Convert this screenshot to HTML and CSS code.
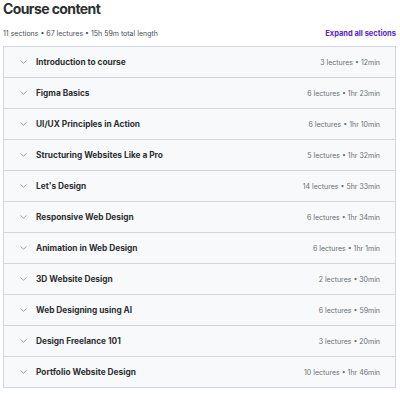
FILE: index.html
```html
<!DOCTYPE html>
<html>
<head>
<meta charset="utf-8">
<link rel="stylesheet" href="styles.css">
</head>
<body>
<div class="page">
  <h2 class="title">Course content</h2>
  <div class="summary">
    <span class="meta">11 sections • 67 lectures • 15h 59m total length</span>
    <span class="expand">Expand all sections</span>
  </div>
  <div class="list">
    <div class="row"><span class="chev"><svg width="7" height="4" viewBox="0 0 7 4"><path d="M0.5 0.5 L3.5 3.2 L6.5 0.5" fill="none" stroke="#8a8f93" stroke-width="0.8"/></svg></span><span class="name">Introduction to course</span><span class="info">3 lectures • 12min</span></div>
    <div class="row"><span class="chev"><svg width="7" height="4" viewBox="0 0 7 4"><path d="M0.5 0.5 L3.5 3.2 L6.5 0.5" fill="none" stroke="#8a8f93" stroke-width="0.8"/></svg></span><span class="name">Figma Basics</span><span class="info">6 lectures • 1hr 23min</span></div>
    <div class="row"><span class="chev"><svg width="7" height="4" viewBox="0 0 7 4"><path d="M0.5 0.5 L3.5 3.2 L6.5 0.5" fill="none" stroke="#8a8f93" stroke-width="0.8"/></svg></span><span class="name">UI/UX Principles in Action</span><span class="info">6 lectures • 1hr 10min</span></div>
    <div class="row"><span class="chev"><svg width="7" height="4" viewBox="0 0 7 4"><path d="M0.5 0.5 L3.5 3.2 L6.5 0.5" fill="none" stroke="#8a8f93" stroke-width="0.8"/></svg></span><span class="name">Structuring Websites Like a Pro</span><span class="info">5 lectures • 1hr 32min</span></div>
    <div class="row"><span class="chev"><svg width="7" height="4" viewBox="0 0 7 4"><path d="M0.5 0.5 L3.5 3.2 L6.5 0.5" fill="none" stroke="#8a8f93" stroke-width="0.8"/></svg></span><span class="name">Let's Design</span><span class="info">14 lectures • 5hr 33min</span></div>
    <div class="row"><span class="chev"><svg width="7" height="4" viewBox="0 0 7 4"><path d="M0.5 0.5 L3.5 3.2 L6.5 0.5" fill="none" stroke="#8a8f93" stroke-width="0.8"/></svg></span><span class="name">Responsive Web Design</span><span class="info">6 lectures • 1hr 34min</span></div>
    <div class="row"><span class="chev"><svg width="7" height="4" viewBox="0 0 7 4"><path d="M0.5 0.5 L3.5 3.2 L6.5 0.5" fill="none" stroke="#8a8f93" stroke-width="0.8"/></svg></span><span class="name">Animation in Web Design</span><span class="info">6 lectures • 1hr 1min</span></div>
    <div class="row"><span class="chev"><svg width="7" height="4" viewBox="0 0 7 4"><path d="M0.5 0.5 L3.5 3.2 L6.5 0.5" fill="none" stroke="#8a8f93" stroke-width="0.8"/></svg></span><span class="name">3D Website Design</span><span class="info">2 lectures • 30min</span></div>
    <div class="row"><span class="chev"><svg width="7" height="4" viewBox="0 0 7 4"><path d="M0.5 0.5 L3.5 3.2 L6.5 0.5" fill="none" stroke="#8a8f93" stroke-width="0.8"/></svg></span><span class="name">Web Designing using AI</span><span class="info">6 lectures • 59min</span></div>
    <div class="row"><span class="chev"><svg width="7" height="4" viewBox="0 0 7 4"><path d="M0.5 0.5 L3.5 3.2 L6.5 0.5" fill="none" stroke="#8a8f93" stroke-width="0.8"/></svg></span><span class="name">Design Freelance 101</span><span class="info">3 lectures • 20min</span></div>
    <div class="row"><span class="chev"><svg width="7" height="4" viewBox="0 0 7 4"><path d="M0.5 0.5 L3.5 3.2 L6.5 0.5" fill="none" stroke="#8a8f93" stroke-width="0.8"/></svg></span><span class="name">Portfolio Website Design</span><span class="info">10 lectures • 1hr 46min</span></div>
  </div>
</div>
</body>
</html>
```
FILE: styles.css
```css
html, body {
  margin: 0;
  padding: 0;
  background: #ffffff;
}
.page {
  padding: 0 4px 0 3px;
  font-family: Inter, "Liberation Sans", sans-serif;
  color: #2d2f31;
}
.title {
  margin: 0;
  font-size: 14px;
  line-height: 17px;
  font-weight: 700;
  letter-spacing: -0.6px;
  color: #2d2f31;
}
.summary {
  display: flex;
  justify-content: space-between;
  align-items: center;
  height: 12px;
  margin-top: 10px;
  margin-bottom: 7px;
}
.meta {
  font-size: 7px;
  color: #4a4e52;
}
.expand {
  font-size: 7.5px;
  font-weight: 700;
  color: #5624d0;
}
.list {
  border: 1px solid #d1d7dc;
}
.row {
  display: flex;
  align-items: center;
  height: 30px;
  background: #f7f9fa;
  border-bottom: 1px solid #d1d7dc;
  padding: 0 15px 0 16px;
}
.row:last-child {
  border-bottom: none;
}
.chev {
  display: flex;
  width: 7px;
  margin-right: 9px;
}
.name {
  flex: 1;
  font-size: 8.3px;
  font-weight: 700;
  color: #2d2f31;
}
.info {
  font-size: 7px;
  color: #6a6f73;
}
```
